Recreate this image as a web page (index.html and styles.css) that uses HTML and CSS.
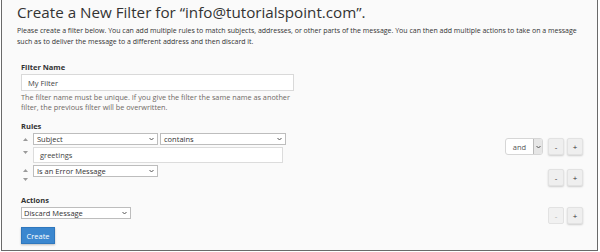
FILE: index.html
```html
<!DOCTYPE html>
<html>
<head>
<meta charset="utf-8">
<link rel="stylesheet" href="styles.css">
</head>
<body>
<div class="frame">
  <h1 class="title">Create a New Filter for “info@tutorialspoint.com”.</h1>
  <p class="intro">Please create a filter below. You can add multiple rules to match subjects, addresses, or other parts of the message. You can then add multiple actions to take on a message such as to deliver the message to a different address and then discard it.</p>

  <div class="form">
    <div class="label">Filter Name</div>
    <div class="input name-input">My Filter</div>
    <p class="help">The filter name must be unique. If you give the filter the same name as another filter, the previous filter will be overwritten.</p>

    <div class="label rules-label">Rules</div>
    <div class="rule rule-one">
      <div class="arrows">
        <svg class="arrow" width="5" height="3" viewBox="0 0 5 3"><path d="M0 3 L2.5 0 L5 3 Z" fill="#9a9a9a"/></svg>
        <svg class="arrow" width="5" height="3" viewBox="0 0 5 3"><path d="M0 0 L2.5 3 L5 0 Z" fill="#9a9a9a"/></svg>
      </div>
      <div class="fields">
        <div class="sel-row">
          <div class="select sel-subject">Subject<svg class="chev" width="5" height="4" viewBox="0 0 5 4"><path d="M0.5 1 L2.5 3 L4.5 1" fill="none" stroke="#555" stroke-width="1"/></svg></div>
          <div class="select sel-contains">contains<svg class="chev" width="5" height="4" viewBox="0 0 5 4"><path d="M0.5 1 L2.5 3 L4.5 1" fill="none" stroke="#555" stroke-width="1"/></svg></div>
        </div>
        <div class="input val-input">greetings</div>
      </div>
      <div class="controls">
        <div class="andsel"><span class="and-text">and</span><span class="and-btn"><svg width="5" height="4" viewBox="0 0 5 4"><path d="M0.5 1 L2.5 3 L4.5 1" fill="none" stroke="#555" stroke-width="1"/></svg></span></div>
        <div class="btn">-</div>
        <div class="btn">+</div>
      </div>
    </div>

    <div class="rule rule-two">
      <div class="arrows">
        <svg class="arrow" width="5" height="3" viewBox="0 0 5 3"><path d="M0 3 L2.5 0 L5 3 Z" fill="#9a9a9a"/></svg>
        <svg class="arrow" width="5" height="3" viewBox="0 0 5 3"><path d="M0 0 L2.5 3 L5 0 Z" fill="#9a9a9a"/></svg>
      </div>
      <div class="fields">
        <div class="select sel-subject">Is an Error Message<svg class="chev" width="5" height="4" viewBox="0 0 5 4"><path d="M0.5 1 L2.5 3 L4.5 1" fill="none" stroke="#555" stroke-width="1"/></svg></div>
      </div>
      <div class="controls">
        <div class="btn">-</div>
        <div class="btn">+</div>
      </div>
    </div>

    <div class="label actions-label">Actions</div>
    <div class="action">
      <div class="select sel-action">Discard Message<svg class="chev" width="5" height="4" viewBox="0 0 5 4"><path d="M0.5 1 L2.5 3 L4.5 1" fill="none" stroke="#555" stroke-width="1"/></svg></div>
      <div class="controls">
        <div class="btn disabled">-</div>
        <div class="btn">+</div>
      </div>
    </div>

    <div class="create">Create</div>
  </div>
</div>
</body>
</html>
```

FILE: styles.css
```css
html, body {
  margin: 0;
  padding: 0;
  background: #ffffff;
}
body {
  font-family: "Open Sans", "Noto Sans", sans-serif;
  color: #333;
}
.frame {
  box-sizing: border-box;
  width: 597px;
  height: 251px;
  margin-left: 1px;
  border: 1px solid #6a6a6a;
  border-top: none;
  background: #fafafa;
  padding: 0 14px 0 15px;
}
.title {
  margin: 0;
  padding-top: 2px;
  font-size: 15.2px;
  font-weight: 400;
  line-height: 21px;
  color: #333;
}
.intro {
  margin: 2px 0 0 0;
  font-size: 7px;
  line-height: 11px;
  color: #333;
}
.form {
  padding-left: 4px;
  margin-top: 15px;
}
.label {
  font-size: 7.5px;
  font-weight: 700;
  line-height: 10px;
  color: #333;
}
.input {
  box-sizing: border-box;
  background: #fff;
  border: 1px solid #d9d9d9;
  font-size: 7.5px;
  color: #444;
  display: flex;
  align-items: center;
  padding-left: 6px;
}
.name-input {
  width: 273px;
  height: 17px;
  margin-top: 2px;
}
.help {
  margin: 1px 0 0 0;
  font-size: 7.3px;
  line-height: 10px;
  color: #6e6864;
  width: 276px;
}
.rules-label {
  margin-top: 9px;
}
.rule {
  display: flex;
  align-items: flex-start;
}
.rule-one {
  margin-top: 2px;
}
.rule-one .controls {
  margin-top: 5px;
}
.rule-two {
  margin-top: 2px;
}
.rule-two .controls {
  margin-top: 4px;
}
.arrows {
  width: 12px;
  align-self: stretch;
  display: flex;
  flex-direction: column;
  padding-left: 2px;
  box-sizing: border-box;
}
.rule-one .arrows {
  padding-top: 5px;
  gap: 10px;
}
.rule-two .arrows {
  padding-top: 4px;
  gap: 6px;
}
.arrow {
  display: block;
}
.fields {
  display: flex;
  flex-direction: column;
  gap: 2px;
}
.sel-row {
  display: flex;
  gap: 2px;
}
.select {
  box-sizing: border-box;
  height: 12px;
  background: #fff;
  border: 1px solid #bdbdbd;
  font-size: 7.5px;
  color: #333;
  display: flex;
  align-items: center;
  justify-content: space-between;
  padding: 0 3px 0 3px;
}
.sel-subject {
  width: 125px;
}
.sel-contains {
  width: 126px;
}
.chev {
  display: block;
}
.val-input {
  width: 250px;
  height: 16px;
  padding-left: 6px;
  border-color: #dcdcdc;
}
.controls {
  margin-left: auto;
  display: flex;
  align-items: center;
  gap: 3px;
}
.andsel {
  display: flex;
  height: 17px;
  box-sizing: border-box;
  border: 1px solid #d6d6d6;
  border-radius: 3px;
  background: #fff;
  margin-right: 2px;
  overflow: hidden;
}
.and-text {
  width: 27px;
  font-size: 7.5px;
  color: #555;
  display: flex;
  align-items: center;
  justify-content: center;
}
.and-btn {
  width: 8px;
  background: #e6e6e6;
  border-left: 1px solid #bbb;
  display: flex;
  align-items: center;
  justify-content: center;
}
.btn {
  box-sizing: border-box;
  width: 16px;
  height: 17px;
  background: #efefef;
  border: 1px solid #e2e2e2;
  border-radius: 2px;
  box-shadow: 0 1px 2px rgba(0,0,0,0.18);
  font-size: 8px;
  color: #333;
  display: flex;
  align-items: center;
  justify-content: center;
}
.btn.disabled {
  color: #aaa;
  box-shadow: none;
  background: #f1f1f1;
}
.actions-label {
  margin-top: 9px;
}
.action {
  display: flex;
  align-items: flex-start;
  margin-top: 2px;
}
.sel-action {
  width: 110px;
  padding-left: 2px;
}
.create {
  margin-top: 3px;
  width: 34px;
  height: 17px;
  background: #3b87cf;
  border: 1px solid #2f77bd;
  box-sizing: border-box;
  box-shadow: 0 1px 2px rgba(0,0,0,0.25);
  color: #fff;
  font-size: 7.5px;
  display: flex;
  align-items: center;
  justify-content: center;
}
```
